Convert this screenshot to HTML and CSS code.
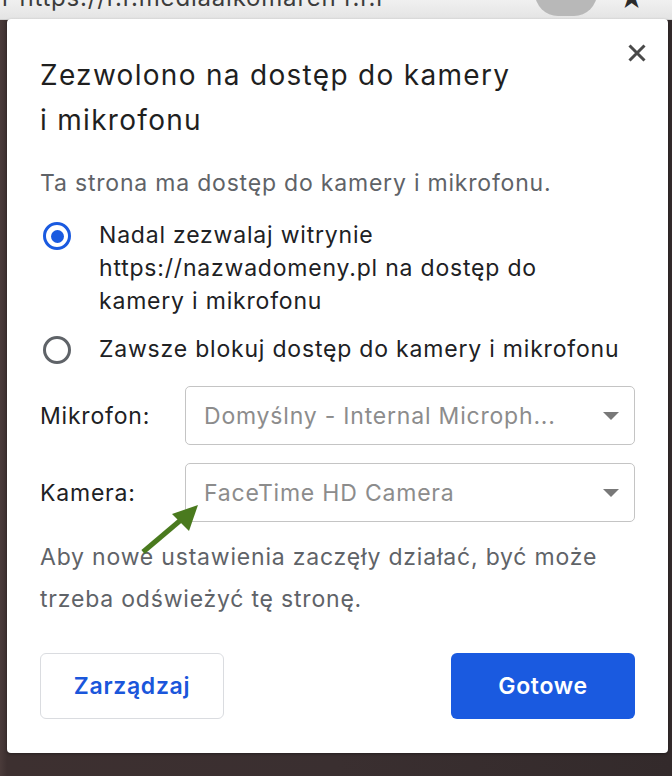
FILE: index.html
```html
<!DOCTYPE html>
<html lang="pl">
<head>
<meta charset="utf-8">
<title>Zezwolono na dostęp do kamery i mikrofonu</title>
<link rel="stylesheet" href="styles.css">
</head>
<body>
<div class="page">
  <div class="topbar">
    <span class="url">r https://r.r.mediaalkomaren r.r.r</span>
    <span class="pill"></span>
    <span class="star">★</span>
  </div>
  <div class="stage">
    <div class="dialog">
      <button class="close" aria-label="Zamknij">
        <svg width="20" height="20" viewBox="0 0 20 20"><path d="M2.5 2.5 L17.5 17.5 M17.5 2.5 L2.5 17.5" stroke="#4a4a4a" stroke-width="3" stroke-linecap="butt" fill="none"/></svg>
      </button>
      <h1 class="title">Zezwolono na dostęp do kamery<br>i mikrofonu</h1>
      <p class="lead">Ta strona ma dostęp do kamery i mikrofonu.</p>
      <div class="options">
        <label class="option">
          <span class="radio checked"></span>
          <span class="opt-text">Nadal zezwalaj witrynie<br>https://nazwadomeny.pl na dostęp do<br>kamery i mikrofonu</span>
        </label>
        <label class="option">
          <span class="radio"></span>
          <span class="opt-text">Zawsze blokuj dostęp do kamery i mikrofonu</span>
        </label>
      </div>
      <div class="fields">
        <div class="field">
          <span class="field-label">Mikrofon:</span>
          <div class="select"><span class="select-text">Domyślny - Internal Microph...</span><span class="caret"></span></div>
        </div>
        <div class="field">
          <span class="field-label">Kamera:</span>
          <div class="select"><span class="select-text">FaceTime HD Camera</span><span class="caret"></span></div>
        </div>
      </div>
      <p class="note">Aby nowe ustawienia zaczęły działać, być może<br>trzeba odświeżyć tę stronę.</p>
      <div class="actions">
        <button class="btn btn-secondary">Zarządzaj</button>
        <button class="btn btn-primary">Gotowe</button>
      </div>
      <svg class="arrow" width="80" height="70" viewBox="0 0 80 70">
        <line x1="13" y1="63" x2="52" y2="30" stroke="#4a7a1e" stroke-width="5"/>
        <polygon points="68,16 42,25 59,42" fill="#4a7a1e"/>
      </svg>
    </div>
  </div>
</div>
</body>
</html>
```
FILE: styles.css
```css
* { box-sizing: border-box; }
html, body { margin: 0; padding: 0; }
body {
  width: 672px;
  height: 776px;
  overflow: hidden;
  font-family: Inter, "Noto Sans", sans-serif;
  background: #3a2e2f;
}
.page {
  width: 672px;
  height: 776px;
  display: flex;
  flex-direction: column;
  background: linear-gradient(90deg, #4a3b3a 0px, #3d3030 7px, #3a2f30 50%, #332a2b 100%);
}
.topbar {
  height: 20px;
  flex: none;
  background: linear-gradient(#f0f0f0, #e4e4e4);
  border-bottom: 1px solid #cfcfcf;
  position: relative;
  overflow: hidden;
}
.url {
  position: absolute;
  left: 2px;
  top: -17px;
  font-size: 24px;
  letter-spacing: 0.8px;
  color: #3c3c3c;
  white-space: nowrap;
}
.pill {
  position: absolute;
  left: 535px;
  top: -30px;
  width: 62px;
  height: 46px;
  border-radius: 23px;
  background: #b8b8b8;
}
.star {
  position: absolute;
  left: 618px;
  top: -17px;
  font-size: 26px;
  color: #2a2a2a;
}
.stage {
  flex: 1;
  display: flex;
  padding: 0 4px 23px 7px;
  margin-top: -1px;
}
.dialog {
  position: relative;
  flex: 1;
  background: #fff;
  border-radius: 4px;
  box-shadow: 0 1px 3px rgba(0,0,0,0.35);
  padding: 34px 33px 0 33px;
  display: flex;
  flex-direction: column;
}
.close {
  position: absolute;
  top: 24px;
  right: 21px;
  width: 20px;
  height: 20px;
  padding: 0;
  border: 0;
  background: none;
  display: flex;
}
.title {
  margin: 0;
  font-weight: 400;
  font-size: 28px;
  line-height: 45px;
  color: #1f1f1f;
  letter-spacing: 1.3px;
}
.lead {
  margin: 25px 0 0;
  font-size: 23px;
  line-height: 30px;
  letter-spacing: 0.8px;
  color: #5f6368;
}
.options {
  margin-top: 21px;
  display: flex;
  flex-direction: column;
  gap: 15px;
}
.option {
  display: flex;
  align-items: flex-start;
}
.radio {
  flex: none;
  width: 28px;
  height: 28px;
  margin: 3px 28px 0 3px;
  border-radius: 50%;
  border: 3px solid #5f6368;
  display: flex;
  align-items: center;
  justify-content: center;
}
.radio.checked { border-color: #1a5ae0; }
.radio.checked::after {
  content: "";
  width: 13px;
  height: 13px;
  border-radius: 50%;
  background: #1a5ae0;
}
.opt-text {
  font-size: 23px;
  line-height: 33px;
  letter-spacing: 0.8px;
  color: #202124;
}
.fields {
  margin-top: 20px;
  display: flex;
  flex-direction: column;
  gap: 18px;
}
.field {
  display: flex;
  align-items: center;
}
.field-label {
  width: 145px;
  flex: none;
  font-size: 23px;
  letter-spacing: 0.8px;
  color: #202124;
}
.select {
  flex: 1;
  height: 59px;
  border: 1px solid #c4c4c4;
  border-radius: 5px;
  display: flex;
  align-items: center;
  padding: 0 15px 0 18px;
}
.select-text {
  flex: 1;
  font-size: 23px;
  letter-spacing: 0.8px;
  color: #8c8c8c;
  white-space: nowrap;
}
.caret {
  width: 0;
  height: 0;
  border-left: 8px solid transparent;
  border-right: 8px solid transparent;
  border-top: 8px solid #787878;
}
.note {
  margin: 14px 0 0;
  font-size: 23px;
  line-height: 42px;
  letter-spacing: 0.8px;
  color: #5f6368;
}
.actions {
  margin-top: 33px;
  display: flex;
  justify-content: space-between;
}
.btn {
  height: 66px;
  width: 184px;
  border-radius: 6px;
  font-family: Inter, "Noto Sans", sans-serif;
  font-size: 23px;
  font-weight: 600;
  letter-spacing: 0.7px;
}
.btn-secondary {
  background: #fff;
  border: 1px solid #dadce0;
  color: #1a56db;
}
.btn-primary {
  background: #1a5ae0;
  border: 0;
  color: #fff;
}
.arrow {
  position: absolute;
  left: 123px;
  top: 470px;
}
```
